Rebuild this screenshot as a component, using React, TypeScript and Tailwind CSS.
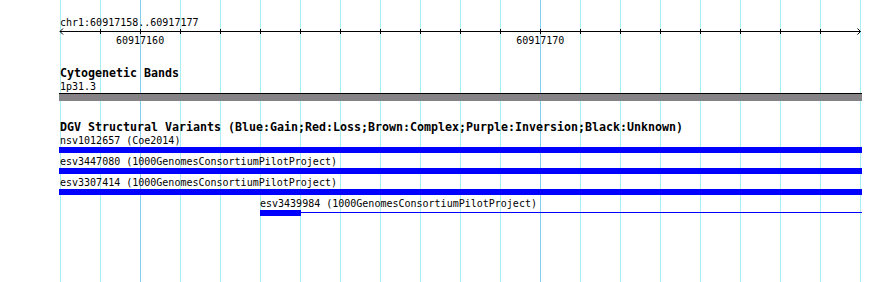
export default function App() {
  const lines = Array.from({ length: 21 }, (_, i) => i);
  const ticks = Array.from({ length: 19 }, (_, i) => i + 1);
  return (
    <div className="relative w-[890px] h-[282px] overflow-hidden bg-white text-black font-['DejaVu_Sans_Mono','Liberation_Mono',monospace]">
      <div className="absolute inset-y-0 left-[60px] flex gap-[39px]">
        {lines.map((i) => (
          <div
            key={i}
            className={i === 2 || i === 12 ? "w-px h-full bg-[#84cff0]" : "w-px h-full bg-[#a8eef2]"}
          />
        ))}
      </div>

      <div className="relative w-[862px] pl-[59px] pt-[16px]">
        {/* Ruler */}
        <div className="h-[13px] pl-px text-[10px] leading-[13px] whitespace-nowrap">chr1:60917158..60917177</div>
        <svg width="803" height="5" className="block overflow-visible" viewBox="0 0 803 5">
          <line x1="1" y1="2.5" x2="801.5" y2="2.5" stroke="#000" strokeWidth="1" />
          {ticks.map((i) => (
            <line key={i} x1={1.5 + 40 * i} y1="0" x2={1.5 + 40 * i} y2="5" stroke="#000" strokeWidth="1" />
          ))}
          <polyline points="4,-0.5 1,2.5 4,5.5" fill="none" stroke="#000" strokeWidth="1" />
          <polyline points="798.5,-0.5 801.5,2.5 798.5,5.5" fill="none" stroke="#000" strokeWidth="1" />
        </svg>
        <div className="flex h-[13px] text-[10px] leading-[13px] whitespace-nowrap">
          <span className="ml-[57px]">60917160</span>
          <span className="ml-[352px]">60917170</span>
        </div>

        {/* Cytogenetic Bands */}
        <div className="mt-[20px] h-[13px] pl-px text-[11.63px] font-bold leading-[13px] whitespace-nowrap">Cytogenetic Bands</div>
        <div className="h-[13px] pl-px text-[10px] leading-[13px] whitespace-nowrap">1p31.3</div>
        <div className="h-[8px] w-full border-t border-black bg-[#858385]" />

        {/* DGV */}
        <div className="mt-[20px] h-[13px] pl-px text-[11.63px] font-bold leading-[13px] whitespace-nowrap">
          DGV Structural Variants (Blue:Gain;Red:Loss;Brown:Complex;Purple:Inversion;Black:Unknown)
        </div>
        <div className="h-[13px] pl-px text-[10px] leading-[13px] whitespace-nowrap">nsv1012657 (Coe2014)</div>
        <div className="h-[6px] w-full bg-[#0000ff]" />

        <div className="mt-[2px] h-[13px] pl-px text-[10px] leading-[13px] whitespace-nowrap">esv3447080 (1000GenomesConsortiumPilotProject)</div>
        <div className="h-[6px] w-full bg-[#0000ff]" />

        <div className="mt-[2px] h-[13px] pl-px text-[10px] leading-[13px] whitespace-nowrap">esv3307414 (1000GenomesConsortiumPilotProject)</div>
        <div className="h-[6px] w-full bg-[#0000ff]" />

        <div className="mt-[2px] h-[13px] pl-[201px] text-[10px] leading-[13px] whitespace-nowrap">esv3439984 (1000GenomesConsortiumPilotProject)</div>
        <div className="flex h-[6px] items-start">
          <div className="ml-[201px] h-[6px] w-[41px] bg-[#0000ff]" />
          <div className="mt-[2px] h-px flex-1 bg-[#0000ff]" />
        </div>
      </div>
    </div>
  );
}
